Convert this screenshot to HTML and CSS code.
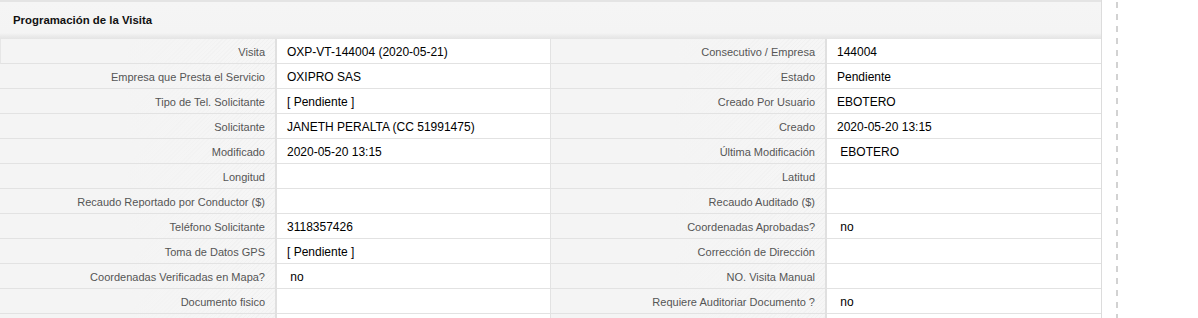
FILE: index.html
```html
<!DOCTYPE html>
<html lang="es">
<head>
<meta charset="utf-8">
<title>Programación de la Visita</title>
<link rel="stylesheet" href="styles.css">
</head>
<body>
<div class="page">
  <section class="panel">
    <header class="panel-head"><h2 class="panel-title">Programación de la Visita</h2></header>
    <div class="grid">
      <div class="lbl">Visita</div><div class="val">OXP-VT-144004 (2020-05-21)</div>
      <div class="lbl">Consecutivo / Empresa</div><div class="val">144004</div>

      <div class="lbl">Empresa que Presta el Servicio</div><div class="val">OXIPRO SAS</div>
      <div class="lbl">Estado</div><div class="val">Pendiente</div>

      <div class="lbl">Tipo de Tel. Solicitante</div><div class="val">[ Pendiente ]</div>
      <div class="lbl">Creado Por Usuario</div><div class="val">EBOTERO</div>

      <div class="lbl">Solicitante</div><div class="val">JANETH PERALTA (CC 51991475)</div>
      <div class="lbl">Creado</div><div class="val">2020-05-20 13:15</div>

      <div class="lbl">Modificado</div><div class="val">2020-05-20 13:15</div>
      <div class="lbl">Última Modificación</div><div class="val">&nbsp;EBOTERO</div>

      <div class="lbl">Longitud</div><div class="val"></div>
      <div class="lbl">Latitud</div><div class="val"></div>

      <div class="lbl">Recaudo Reportado por Conductor ($)</div><div class="val"></div>
      <div class="lbl">Recaudo Auditado ($)</div><div class="val"></div>

      <div class="lbl">Teléfono Solicitante</div><div class="val">3118357426</div>
      <div class="lbl">Coordenadas Aprobadas?</div><div class="val">&nbsp;no</div>

      <div class="lbl">Toma de Datos GPS</div><div class="val">[ Pendiente ]</div>
      <div class="lbl">Corrección de Dirección</div><div class="val"></div>

      <div class="lbl">Coordenadas Verificadas en Mapa?</div><div class="val">&nbsp;no</div>
      <div class="lbl">NO. Visita Manual</div><div class="val"></div>

      <div class="lbl">Documento fisico</div><div class="val"></div>
      <div class="lbl">Requiere Auditoriar Documento ?</div><div class="val">&nbsp;no</div>

      <div class="lbl"></div><div class="val"></div>
      <div class="lbl"></div><div class="val"></div>
    </div>
  </section>
  <div class="divider"></div>
</div>
</body>
</html>
```

FILE: styles.css
```css
html, body {
  margin: 0;
  padding: 0;
  background: #ffffff;
}

body {
  font-family: "Liberation Sans", Arial, sans-serif;
  font-size: 12px;
  color: #000;
}

.page {
  display: flex;
  align-items: flex-start;
  gap: 14px;
  height: 318px;
  overflow: hidden;
}

.panel {
  width: 1101px;
  border-right: 1px solid #dcdcdc;
  flex: none;
}

.panel-head {
  height: 37px;
  border-top: 2px solid #e4e4e4;
  background: linear-gradient(to bottom, #f5f5f5 0, #f4f4f4 31px, #ebebeb 34px, #e4e4e4 37px);
  display: flex;
  align-items: center;
  padding-left: 13px;
}

.panel-title {
  margin: 0;
  font-size: 11.4px;
  font-weight: bold;
  color: #111;
  padding-bottom: 1px;
}

.grid {
  display: grid;
  grid-template-columns: 277px 274px 276px 274px;
  grid-auto-rows: 25px;
}

.lbl,
.val {
  box-sizing: border-box;
  border-bottom: 1px solid #e2e2e2;
  display: flex;
  align-items: center;
  white-space: pre;
  overflow: hidden;
  padding-top: 1px;
}

.lbl {
  justify-content: flex-end;
  padding-right: 10px;
  font-size: 11px;
  color: #555;
  border-right: 2px solid #e0e0e0;
  background-color: #f4f4f4;
  background-image:
    linear-gradient(to right, #f4f4f4 45%, rgba(244,244,244,0) 100%),
    repeating-linear-gradient(135deg, #f1f1f1 0 1px, #f6f6f6 1px 3px);
}

.grid .lbl:first-child {
  border-left: 1px solid #e6e6e6;
}

.val {
  padding-left: 10px;
  background: #fff;
  border-right: 1px solid #e2e2e2;
  color: #000;
}

.val:nth-child(4n) {
  border-right: none;
}

.divider {
  width: 2px;
  height: 318px;
  flex: none;
  background: repeating-linear-gradient(to bottom, transparent 0 2px, #d2d2d2 2px 8px, transparent 8px 12px);
}
```
